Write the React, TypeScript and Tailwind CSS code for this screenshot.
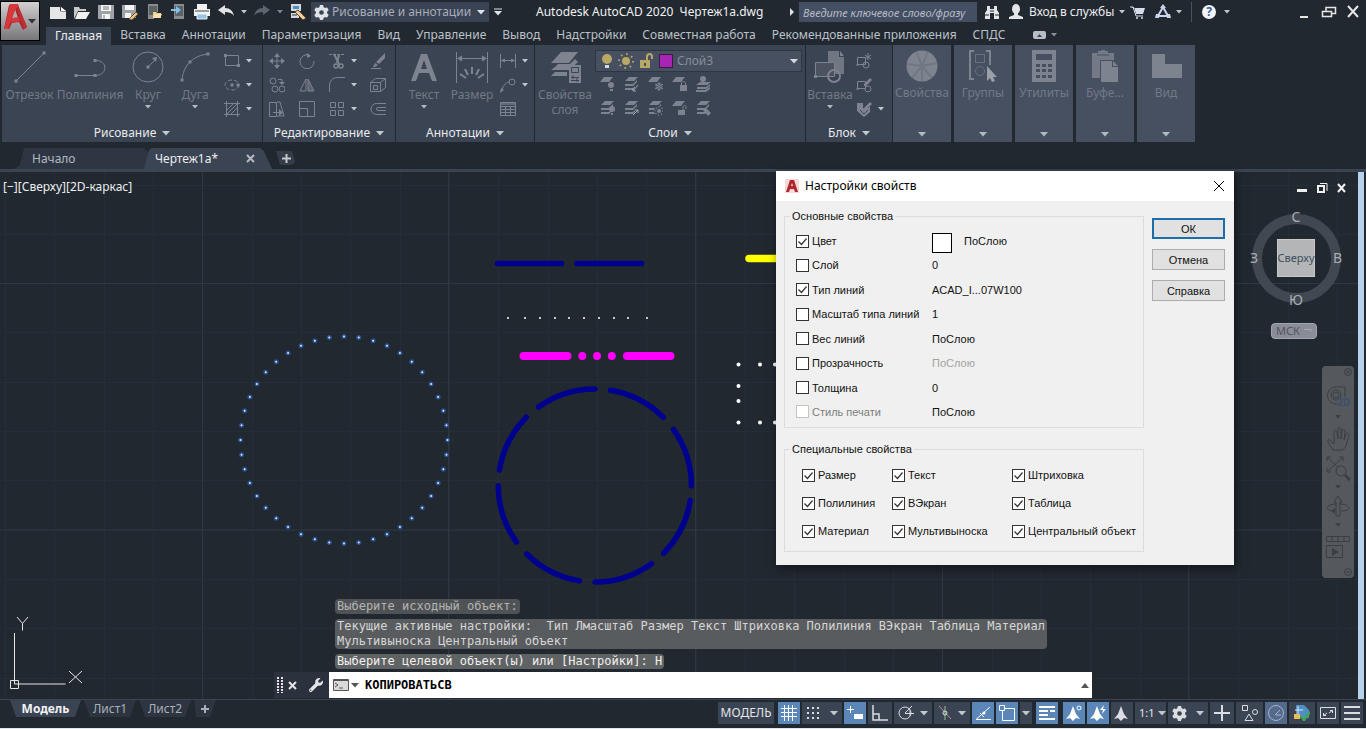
import type { ReactNode } from 'react';
import { FaWrench } from 'react-icons/fa';
import { FaGear } from 'react-icons/fa6';

type IconProps = { w?: number; h?: number; className?: string; children: ReactNode };

function Icon({ w = 16, h = 16, className = '', children }: IconProps) {
  return (
    <svg width={w} height={h} viewBox={`0 0 ${w} ${h}`} fill="none" stroke="currentColor" className={`shrink-0 ${className}`} aria-hidden="true">
      {children}
    </svg>
  );
}

function Caret({ className = 'text-[#c3c7ce]', size = 'sm' }: { className?: string; size?: 'sm' | 'md' }) {
  return size === 'sm' ? (
    <Icon w={6} h={4} className={className}><path d="M0 0h6L3 3.5z" fill="currentColor" stroke="none" /></Icon>
  ) : (
    <Icon w={8} h={5} className={className}><path d="M0 0h8L4 4.5z" fill="currentColor" stroke="none" /></Icon>
  );
}

const solid = { fill: 'currentColor', stroke: 'none' };

const logoLetter = (
  <>
    <path d="M5 1h9l9 22-4 3-4-8-7 1-3 6H0z" fill="#a8262b" stroke="none" />
    <path d="m8 14 3-9 3 9z" fill="#b3adae" stroke="none" />
    <path d="M6 0h8l1 3-3 1-5 13-3 8H0zM8 14l7-1 1 4-9 2z" fill="#d5393c" stroke="none" />
    <path d="m14 2 9 21-3 2-7-19z" fill="#c22e33" stroke="none" />
  </>
);

const quickAccess = [
  { name: 'Создать', icon: <Icon><path d="M0 3h10l6 4v8H0z" fill="#e6e6e6" stroke="none" /><path d="M10.500 2v5H16" stroke="#3a3f46" /><path d="m11 3 5 4h-5z" fill="#fff" stroke="none" /></Icon> },
  { name: 'Открыть', icon: <Icon><path d="M0 15V3h5l1 2h6v2H4z" fill="#c9c9c9" stroke="none" /><path d="M4 8h12l-4 7H1z" fill="#f0f0f0" stroke="none" /></Icon> },
  { name: 'Сохранить', icon: <Icon><path d="M0 1h16v14H0z" fill="#9fa3a8" stroke="none" /><path d="M3 1h10v6H3zM4 10h8v5H4z" fill="#f4f4f4" stroke="none" /><path d="M5 3h6M5 5h6M6 11v4" stroke="#777" /></Icon> },
  { name: 'Сохранить как', icon: <Icon><path d="M0 1h14v13H0z" fill="#9fa3a8" stroke="none" /><path d="M3 1h9v5H3zM3 9h6v5H3z" fill="#f4f4f4" stroke="none" /><path d="m7 15 7-7 2 2-6 6z" fill="#f1c27e" stroke="#6b5233" /></Icon> },
  { name: 'Открыть с устройства', icon: <Icon><path d="M2 0h10v8H8v7H2z" fill="#8a8d90" stroke="none" /><path d="M3 2h8v9H3z" fill="#5c6166" stroke="none" /><path d="M7 14V8h3l1 1h4v5z" fill="#f3cf8e" stroke="none" /><path d="m7 14 2-4h7l-2 4z" fill="#ffe2ad" stroke="none" /></Icon> },
  { name: 'Сохранить на устройстве', icon: <Icon><path d="M4 0h10v15H4z" fill="#8a8d90" stroke="none" /><path d="M5 2h8v10H5z" fill="#5c6166" stroke="none" /><path d="M1 5h5V2l5 4-5 4V7H1z" fill="#7cc3ee" stroke="none" /></Icon> },
  { name: 'Печать', icon: <Icon><path d="M3 0h10v5H3zM0 5h16v7H0z" fill="#f1f1f1" stroke="none" /><path d="M1 7h14" stroke="#444" /><path d="M3 10h10v5H3z" fill="#8fc4ec" stroke="#f1f1f1" /></Icon> },
];

function TitleBar() {
  return (
    <div className="flex h-6 items-center">
      <div className="flex items-center pl-[5px]">
        {quickAccess.map((q) => (
          <button key={q.name} aria-label={q.name} className="flex h-6 w-6 items-center justify-center">{q.icon}</button>
        ))}
        <button aria-label="Отменить" className="flex h-6 w-6 items-center justify-center text-[#e3e3e3]">
          <Icon><path d="M0 6 7 1v3c5 0 8 3 9 8-2-3-5-4-9-4v3z" {...solid} /></Icon>
        </button>
        <button aria-label="Список отмены" className="flex h-6 w-3 items-center justify-center"><Caret /></button>
        <button aria-label="Повторить" className="flex h-6 w-6 items-center justify-center text-[#5c6470]">
          <Icon><path d="M16 6 9 1v3C4 4 1 7 0 12c2-3 5-4 9-4v3z" {...solid} /></Icon>
        </button>
        <button aria-label="Список повторов" className="flex h-6 w-3 items-center justify-center"><Caret className="text-[#7c838e]" /></button>
        <button aria-label="Копирование свойств" className="flex h-6 w-6 items-center justify-center">
          <Icon><path d="M1 0h10v7H1zM1 9h8v5H1z" fill="#d5d8dc" stroke="none" /><path d="M3 2h6v3H3z" fill="#4a90c8" stroke="none" /><path d="M2 11h5" stroke="#333" /><path d="m5 8 3-2 8 8-3 2z" fill="#f0cf9c" stroke="#5a4630" /></Icon>
        </button>
      </div>
      <div className="ml-px flex h-5 w-[178px] items-center bg-[#3a4353] pr-1">
        <FaGear className="mx-[3px] h-[15px] w-[15px] text-[#dfe2e6]" />
        <select aria-label="Рабочее пространство" className="min-w-0 flex-1 appearance-none bg-transparent text-xs text-[#a7aeb9]">
          <option>Рисование и аннотации</option>
        </select>
        <Caret size="md" className="text-[#dfe2e6]" />
      </div>
      <button aria-label="Настройка панели" className="flex h-6 w-[18px] items-center justify-center text-[#dfe2e6]">
        <Icon w={8} h={8}><path d="M0 1h8" /><path d="M0 3h8L4 7.5z" {...solid} /></Icon>
      </button>
      <h1 className="ml-[29px] whitespace-pre text-xs text-[#f0f1f3]">Autodesk AutoCAD 2020  Чертеж1a.dwg</h1>
      <div className="ml-auto flex items-center">
        <Icon w={5} h={8} className="mr-1 text-[#dfe2e6]"><path d="M0 0v8l4-4z" {...solid} /></Icon>
        <input aria-label="Поиск" placeholder="Введите ключевое слово/фразу" className="h-5 w-[178px] bg-[#454f63] px-1 text-[11px] italic placeholder:text-[#b6bcc6]" />
        <button aria-label="Найти" className="ml-[7px] text-[#e3e5e8]">
          <Icon><path d="M3 2h3v3h4V2h3v4l2 3v6h-5V9H6v6H1V9l2-3z" {...solid} /><path d="M1 11h4M11 11h4M6 7h4" stroke="#212830" /></Icon>
        </button>
        <button className="ml-2 flex items-center gap-[5px] text-xs text-[#eceef0]">
          <Icon><ellipse cx="8" cy="5" rx="4" ry="5" fill="#e3e5e8" stroke="none" /><path d="M6 9h4v2l5 2v2H1v-2l5-2z" fill="#e3e5e8" stroke="none" /></Icon>
          <span className="w-[85px] whitespace-nowrap text-left">Вход в службы</span>
          <Caret />
        </button>
        <button aria-label="Магазин" className="ml-[5px] text-[#d5dcea]">
          <Icon><path d="M1 3h3l2 7h7l2-6H5z" {...solid} /><path d="M0 3h3l3 9h7" /><circle cx="7" cy="14" r="1" {...solid} /><circle cx="12" cy="14" r="1" {...solid} /></Icon>
        </button>
        <button aria-label="Autodesk App Store" className="ml-[9px] flex items-center gap-[5px] text-[#c9d4ee]">
          <Icon><path d="m8 3 5 9H3z" strokeWidth="2" /><path d="M8 0 5 4h6zM1 10h4l-1 4H0zM11 10h4l1 4h-4z" {...solid} /></Icon>
          <Caret />
        </button>
        <span className="ml-[9px] h-5 w-px bg-[#4a525e]" />
        <button aria-label="Справка" className="ml-[10px] flex items-center gap-2">
          <span className="flex h-[14px] w-[14px] items-center justify-center rounded-full bg-[#f2f4f7] text-xs font-bold leading-none text-[#34609a]">?</span>
          <Caret />
        </button>
        <button aria-label="Свернуть" className="ml-[66px] text-[#e6e6e6]"><Icon><path d="M4 13h8" strokeWidth="2" /></Icon></button>
        <button aria-label="Восстановить" className="ml-[9px] text-[#e6e6e6]"><Icon><path d="M5 7V3.500h9.500v6H11M1.500 7.500h9v5h-9z" strokeWidth="1.500" /></Icon></button>
        <button aria-label="Закрыть" className="ml-2 mr-[5px] text-[#e6e6e6]"><Icon><path d="m3 2 10 11M13 2 3 13" strokeWidth="2" /></Icon></button>
      </div>
    </div>
  );
}

const menuTabs = ['Вставка', 'Аннотации', 'Параметризация', 'Вид', 'Управление', 'Вывод', 'Надстройки', 'Совместная работа', 'Рекомендованные приложения', 'СПДС'];

function MenuTabs() {
  return (
    <nav className="flex h-[21px] items-stretch pl-[5px] text-xs text-[#bcc1c9]">
      <button className="mr-px mt-[3px] bg-[#3b4453] px-[9px] text-[#eceef1]">Главная</button>
      {menuTabs.map((t) => (
        <button key={t} className="whitespace-nowrap px-2 pt-px">{t}</button>
      ))}
      <button aria-label="Вид ленты" className="ml-[20px] flex items-center gap-[5px] pt-px">
        <Icon w={13} h={8}><rect width="13" height="8" rx="2" fill="#b9bdc4" stroke="none" /><path d="M4 6h5L6.500 3z" fill="#3b4453" stroke="none" /></Icon>
        <Caret className="text-[#8a919c]" />
      </button>
    </nav>
  );
}

const square = (x: number, y: number) => <rect x={x - 1.5} y={y - 1.5} width="3" height="3" {...solid} />;

const bigIcons = {
  line: <Icon w={32} h={32}><path d="M2 30 30 2" />{square(2, 30)}{square(30, 2)}</Icon>,
  polyline: <Icon w={32} h={32}><path d="M1 24.500h20c13 0 13-15 1-15" />{square(2, 24.5)}{square(21, 24.5)}{square(21, 9.5)}</Icon>,
  circle: <Icon w={32} h={32}><circle cx="16" cy="16" r="15" />{square(16, 16)}<path d="m16 16 7-7" /><path d="m25 6-1 5-4-4z" {...solid} /></Icon>,
  arc: <Icon w={32} h={32}><path d="M3 29C4 15 14 4 30 3" />{square(3, 29)}{square(11, 11)}{square(29, 3)}</Icon>,
  text: <Icon w={32} h={32}><path d="M3 30 13 3h6l10 27h-5l-3-8H11l-3 8zM13 18h6l-3-9z" {...solid} /></Icon>,
  dimension: <Icon w={32} h={32}><path d="M.5 1v31M31.500 1v31M2 7.500h28" /><path d="m1 7.500 5-3v6zM31 7.500l-5-3v6z" {...solid} /><path d="M16 16v7M9 18l3 6M23 18l-3 6M4 23l6 4M28 23l-6 4" strokeWidth="2" /></Icon>,
  layers: <Icon w={32} h={32}><path d="M12 1h17l-9 11H2zM6 16l3-3h12l5-5 3 3-9 8H2zM2 25l4-4h12v4z" {...solid} /><rect x="20" y="14" width="12" height="18" {...solid} /><path d="M22.500 16.500h7v5h-7zM22 26.500h8M22 29.500h8M24 24v4M28 27v4" stroke="#3b4453" /></Icon>,
  insert: <Icon w={32} h={32}><path d="M14 0h11v6h5v17h-9V11h-7z" {...solid} opacity=".8" /><path d="m26 0 4 5h-4z" {...solid} /><path d="M1.500 11.500h19v14h-19z" fill="#4b5361" /><circle cx="20" cy="25" r="6" strokeWidth="2" />{square(1.5, 25.5)}</Icon>,
  properties: <Icon w={32} h={32}><circle cx="16" cy="16" r="15.500" {...solid} /><path d="M16 16 10 1M16 16 22 1M16 16 1 14M16 16l15-3M16 16 6 28M16 16l10 12M16 16v15" stroke="#646c78" strokeWidth="2" opacity=".5" /></Icon>,
  group: <Icon w={32} h={32}><path d="M7 1H3v28h4M19 1h4v14" strokeWidth="2" /><rect x="8.500" y="4.500" width="9" height="8" opacity=".6" /><circle cx="13" cy="21" r="4.500" opacity=".6" /><path d="M20 16v15l3-3 2 4 3-1-2-4h4z" fill="#9a9fa8" stroke="none" /></Icon>,
  utilities: <Icon w={32} h={32}><path d="M4 0h24v32H4z" {...solid} /><path d="M8 4h16v6H8zM8 14h4v3H8zM14 14h4v3h-4zM20 14h4v3h-4zM8 19h4v3H8zM14 19h4v3h-4zM20 19h4v3h-4zM8 25h4v3H8zM14 25h4v3h-4zM20 25h4v3h-4z" fill="#465061" stroke="none" /></Icon>,
  clipboard: <Icon w={32} h={32}><path d="M3 3h6V1h3V0h4v1h3v2h6v7H11v18H3z" {...solid} opacity=".8" /><path d="M8 5h12" stroke="#465061" /><path d="M12 11h11v6h6v15H12zM24 11l5 5h-5z" {...solid} /><path d="M11.500 32V10.500H24" stroke="#465061" /></Icon>,
  view: <Icon w={32} h={32}><path d="M2 4h13v10h17v14H2z" {...solid} /></Icon>,
};

type BigButtonProps = { label: string; second?: string; icon: ReactNode; width: string; arrow?: boolean };

function BigButton({ label, second, icon, width, arrow }: BigButtonProps) {
  return (
    <button className={`flex shrink-0 flex-col items-center pt-[6px] ${width}`}>
      {icon}
      <span className="mt-1 whitespace-nowrap text-xs text-[#727986]">{label}</span>
      {second && <span className="whitespace-nowrap text-xs leading-[14px] text-[#727986]">{second}</span>}
      {arrow && <Caret className="mt-[2px] text-[#b5bac2]" />}
    </button>
  );
}

function SmallButton({ name, icon, arrow }: { name: string; icon: ReactNode; arrow?: boolean }) {
  return (
    <button aria-label={name} className="flex h-6 items-center gap-[6px]">
      {icon}
      {arrow && <Caret className="text-[#c3c7ce]" />}
    </button>
  );
}

function Panel({ title, width, children }: { title: string; width: string; children: ReactNode }) {
  return (
    <section className={`flex shrink-0 flex-col bg-[#3b4453] text-[#7e848f] ${width}`}>
      <div className="flex flex-1">{children}</div>
      <button className="flex h-[18px] items-center justify-center gap-[6px] text-xs text-[#e8eaed]">
        {title}
        <Caret size="md" />
      </button>
    </section>
  );
}

const collapsed = [
  { label: 'Свойства', icon: bigIcons.properties },
  { label: 'Группы', icon: bigIcons.group },
  { label: 'Утилиты', icon: bigIcons.utilities },
  { label: 'Буфе...', icon: bigIcons.clipboard },
  { label: 'Вид', icon: bigIcons.view },
];

const sheets = <path d="M6 1h9l-4 4H2zM2 8h8l4-4v2l-4 4H2zM2 12h8l2-2v2l-2 2H2z" {...solid} />;
const sheet = <path d="M5 1h9l-4 5H1z" {...solid} />;

const layerTools = [
  { name: 'Отключить слой', icon: <Icon>{sheet}<circle cx="12" cy="9" r="3" {...solid} /><path d="M11 13h3v2h-3z" {...solid} /></Icon> },
  { name: 'Изолировать', icon: <Icon>{sheets}<path d="m15 9-5 6m0-3v3h3" stroke="#a0a5ad" /></Icon> },
  { name: 'Заморозить', icon: <Icon>{sheet}<path d="M12 6v9M8 8l8 5M16 8l-8 5" /><circle cx="12" cy="10.500" r="3" /></Icon> },
  { name: 'Блокировать', icon: <Icon>{sheet}<path d="M9 9h7v6H9z" {...solid} /><path d="M10.500 9V7c0-2 4-2 4 0v2" /></Icon> },
  { name: 'Сделать текущим', icon: <Icon><path d="M5 6h11l-4 3H1zM2 11h9l4-3v2l-4 3H2zM1 14h9l5-3v2l-4 3H1z" {...solid} /><circle cx="8" cy="3" r="3" {...solid} /></Icon> },
  { name: 'Включить все слои', icon: <Icon>{sheets}<circle cx="13" cy="9" r="3" {...solid} /><path d="M12 13h2v2h-2z" {...solid} /></Icon> },
  { name: 'Отменить изоляцию', icon: <Icon>{sheets}<path d="m10 15 5-5m-3 0h3v3" stroke="#a0a5ad" /></Icon> },
  { name: 'Разморозить', icon: <Icon>{sheets}<circle cx="12" cy="11" r="5" fill="#3b4453" stroke="none" /><circle cx="12" cy="11" r="2" {...solid} /><circle cx="12" cy="11" r="4" strokeDasharray="1 2" strokeWidth="1.500" /></Icon> },
  { name: 'Разблокировать', icon: <Icon>{sheet}<path d="M7 10h7v5H7z" {...solid} /><path d="M12 10V7c0-2 3-2 3 0v2" /></Icon> },
  { name: 'Согласовать слой', icon: <Icon>{sheets}<path d="m8 10 3-2 5 5-3 3z" {...solid} /></Icon> },
];

const editTools = [
  [
    { name: 'Переместить', icon: <Icon><path d="M8 1v14M1 8h14" /><path d="m8 0 3 4H5zM8 16l3-4H5zM0 8l4-3v6zM16 8l-4-3v6z" {...solid} /></Icon> },
    { name: 'Копировать', icon: <Icon><circle cx="4" cy="4" r="3" /><circle cx="6" cy="12" r="3" /><circle cx="13" cy="12" r="3" /><path d="M9 2.500h4V6" /><path d="m10 5 3 3 3-3z" {...solid} /></Icon> },
    { name: 'Растянуть', icon: <Icon><path d="M.5 1.500h7v14h-7zM8 1h3l4 14H8M4 11.500h7" /><path d="m10 8 4 3.500-4 3.500z" {...solid} /></Icon> },
  ],
  [
    { name: 'Повернуть', icon: <Icon><path d="M10 2a7 7 0 1 0 5 6" /><path d="M8 0v5l4-2z" {...solid} /></Icon> },
    { name: 'Зеркало', icon: <Icon><path d="M7 2v12H1zM9 2v12h6z" /><path d="M9 2v12h6z" {...solid} opacity=".5" /></Icon> },
    { name: 'Масштаб', icon: <Icon><path d="M.5.5h15v15H.5zM.5 7.500h8v8" /></Icon> },
  ],
  [
    { name: 'Обрезать', icon: <Icon><path d="M0 1.500h16" strokeDasharray="3 1" /><path d="m5 1 5 10M10 2 8 10" strokeWidth="2" /><circle cx="7" cy="13" r="2" strokeWidth="1.500" /><circle cx="12" cy="13" r="2" strokeWidth="1.500" /></Icon>, arrow: true },
    { name: 'Сопряжение', icon: <Icon><path d="M.5 15V9c0-5 3-8.500 8-8.500H16" /></Icon>, arrow: true },
    { name: 'Массив', icon: <Icon><path d="M1.500 1.500h5v5h-5zM9.500 1.500h5v5h-5zM1.500 9.500h5v5h-5zM9.500 9.500h5v5h-5z" /></Icon>, arrow: true },
  ],
  [
    { name: 'Стереть', icon: <Icon><path d="M15 0v5l-6 6-3-2zM5 10l3 2-3 2H3z" {...solid} /><path d="M1 15.500h10" /></Icon> },
    { name: 'Расчленить', icon: <Icon><path d="M.5 5.500h10v9H.5zM.5 5.500l5-4h10v9l-5 4M10.500 5.500l5-4M3.500 8.500h4v4h-4z" /></Icon> },
    { name: 'Подобие', icon: <Icon><path d="M16 2.500H6.500a5.500 5.500 0 0 0 0 11H16M16 6.500H8a1.500 1.500 0 0 0 0 3h8" /></Icon> },
  ],
];

const drawTools = [
  { name: 'Прямоугольник', icon: <Icon><path d="M1.500 2.500h13v10h-13z" />{square(1.5, 2.5)}{square(14.5, 12.5)}</Icon> },
  { name: 'Эллипс', icon: <Icon><ellipse cx="8" cy="8" rx="7" ry="5" strokeDasharray="4 2" />{square(8, 8)}{square(14, 8)}</Icon> },
  { name: 'Штриховка', icon: <Icon><path d="M2.500 0v16M13.500 0v16M0 2.500h16M0 13.500h16M3 9l6-6M3 13 13 3M7 13l6-6" /></Icon> },
];

const noteTools = [
  { name: 'Линейный', icon: <Icon><path d="M.5 1v14M15.500 1v14M1 7.500h14" /><path d="m1 7.500 4-2v4zM15 7.500l-4-2v4z" {...solid} /></Icon>, arrow: true },
  { name: 'Выноска', icon: <Icon><circle cx="12" cy="5" r="3" /><path d="M9 5C5 6 3 9 1 15" /><path d="m0 16 1-5 3 2z" {...solid} /></Icon>, arrow: true },
  { name: 'Таблица', icon: <Icon><path d="M.5 1.500h15v13H.5zM1 5.500h14M1 8.500h14M1 11.500h14M5.500 5v10M10.500 5v10" /><path d="M1 2h14v2H1z" {...solid} opacity=".6" /></Icon> },
];

const blockBase = <path d="M1.500 4.500h8v7h-8zM0 12h3" />;

function Ribbon() {
  return (
    <div className="flex h-[97px] gap-px pl-[2px]">
      <Panel title="Рисование" width="w-[260px]">
        <BigButton label="Отрезок" icon={bigIcons.line} width="w-[55px]" />
        <BigButton label="Полилиния" icon={bigIcons.polyline} width="w-[66px]" />
        <BigButton label="Круг" icon={bigIcons.circle} width="w-[50px]" arrow />
        <BigButton label="Дуга" icon={bigIcons.arc} width="w-[44px]" arrow />
        <div className="ml-[7px] pt-1">
          {drawTools.map((t) => <SmallButton key={t.name} {...t} arrow />)}
        </div>
      </Panel>
      <Panel title="Редактирование" width="w-[132px]">
        <div className="flex gap-[14px] pl-[6px] pt-1">
          {editTools.map((column, i) => (
            <div key={i} className={i === 3 ? '-ml-px' : ''}>
              {column.map((t) => <SmallButton key={t.name} {...t} />)}
            </div>
          ))}
        </div>
      </Panel>
      <Panel title="Аннотации" width="w-[138px]">
        <BigButton label="Текст" icon={bigIcons.text} width="w-[56px]" arrow />
        <BigButton label="Размер" icon={bigIcons.dimension} width="w-[40px]" />
        <div className="ml-2 pt-1">
          {noteTools.map((t) => <SmallButton key={t.name} {...t} />)}
        </div>
      </Panel>
      <Panel title="Слои" width="w-[270px]">
        <BigButton label="Свойства" second="слоя" icon={bigIcons.layers} width="w-[60px]" />
        <div className="flex-1 pr-[3px] pt-[5px]">
          <div className="flex h-[22px] items-center border border-[#2d3643] bg-[#465061] pl-1 pr-[3px]">
            <Icon w={14} className="mr-1 text-[#b9a766]"><circle cx="7" cy="6" r="5" {...solid} /><path d="M5 12h4v3H5z" fill="#d9dbdd" stroke="none" /></Icon>
            <Icon className="mr-[5px] text-[#b9a766]"><circle cx="8" cy="8" r="4" {...solid} /><circle cx="8" cy="8" r="7" strokeWidth="2" strokeDasharray="1.500 4" /></Icon>
            <Icon w={14} className="mr-[6px] text-[#b9a766]"><path d="M1 7h10v8H1z" {...solid} /><path d="M8 7V4c0-4 5-4 5 0v2" strokeWidth="2" /><path d="M6 10v3" stroke="#465061" strokeWidth="2" /></Icon>
            <span className="mr-1 h-[14px] w-[14px] border border-[#3a1a44] bg-[#a825b4]" />
            <select aria-label="Слой" className="min-w-0 flex-1 appearance-none bg-transparent text-xs text-[#878e99]">
              <option>Слой3</option>
            </select>
            <Caret size="md" className="text-[#d5d8dc]" />
          </div>
          <div className="grid w-[124px] grid-cols-5 pl-1">
            {layerTools.map((t) => <SmallButton key={t.name} {...t} />)}
          </div>
        </div>
      </Panel>
      <Panel title="Блок" width="w-[86px]">
        <BigButton label="Вставка" icon={bigIcons.insert} width="w-[48px]" arrow />
        <div className="ml-[2px] pt-1">
          <SmallButton name="Создать блок" icon={<Icon>{blockBase}<circle cx="10" cy="12" r="3" /><path d="M12 0v7M9 2l6 4M15 2 9 6" /></Icon>} />
          <SmallButton name="Редактор блоков" icon={<Icon>{blockBase}<circle cx="12" cy="12" r="3" /><path d="m14 1 2 2-6 6H8V7z" {...solid} /></Icon>} />
          <SmallButton name="Атрибуты" arrow icon={<Icon><path d="M1 2h6v5l3 1 4-2v5l-6 5-7-6z" {...solid} /><path d="m14 1 2 2-6 6H8V7z" {...solid} /><path d="m4 9 4 4 4-4" stroke="#3b4453" /></Icon>} />
        </div>
      </Panel>
      <div className="flex gap-[3px]">
        {collapsed.map((c) => (
          <button key={c.label} className="flex w-[58px] flex-col items-center bg-[#465061] pb-[5px] pt-[5px] text-[#7e848f]">
            {c.icon}
            <span className="mt-[3px] text-xs text-[#727986]">{c.label}</span>
            <Caret size="md" className="mt-auto text-[#b5bac2]" />
          </button>
        ))}
      </div>
    </div>
  );
}

function DocumentTabs() {
  return (
    <div className="flex h-[30px] items-end border-b-[3px] border-[#3b4453] pl-[14px] text-xs">
      <button className="h-[21px] w-[134px] bg-[#2e3643] pl-[18px] text-left text-[#b4b9c1] [clip-path:polygon(0_100%,6px_80%,10px_0,calc(100%-4px)_0,100%_20%,100%_100%)]">Начало</button>
      <div className="-ml-1 flex h-[21px] w-[128px] items-center bg-[#3b4453] pl-[11px] text-[#eceef1] [clip-path:polygon(0_100%,5px_10%,8px_0,calc(100%-12px)_0,calc(100%-8px)_15%,100%_100%)]">
        <button>Чертеж1a*</button>
        <button aria-label="Закрыть вкладку" className="ml-auto mr-[17px] text-[#b4b9c1]"><Icon w={9} h={9}><path d="m1 1 7 7M8 1 1 8" strokeWidth="2" /></Icon></button>
      </div>
      <button aria-label="Новая вкладка" className="mb-1 ml-1 flex h-[14px] w-[20px] items-center justify-center rounded-r-md bg-[#343c48] text-[#c3c7ce] [clip-path:polygon(0_0,80%_0,100%_100%,20%_100%)]">
        <Icon w={9} h={9}><path d="M0 4.500h9M4.500 0v9" strokeWidth="2" /></Icon>
      </button>
    </div>
  );
}

// Selected circle: 44 grips around the centre
const grips = Array.from({ length: 44 }, (_, i) => {
  const a = (i / 44) * Math.PI * 2;
  return { x: 344 + 103.5 * Math.cos(a), y: 268 + 103.5 * Math.sin(a) };
});

const minorLines = Array.from({ length: 28 }, (_, i) => 5 + i * 49.33);
const minorRows = Array.from({ length: 11 }, (_, i) => 12.5 + i * 49.33);

function Drawing() {
  return (
    <svg className="absolute inset-0 h-full w-full" aria-label="Чертеж">
      <g stroke="#252d36">
        {minorLines.map((x) => <path key={x} d={`M${Math.round(x)}.5 0v527`} />)}
        {minorRows.map((y) => <path key={y} d={`M0 ${Math.round(y)}.5h1358`} />)}
      </g>
      <path d="M202.500 0v527M448.500 0v527M695.500 0v527M942.500 0v527M1188.500 0v527M0 111.500h1358M0 358h1358" stroke="#2f3740" />
      {grips.map((g) => (
        <g key={`${g.x}-${g.y}`}>
          <circle cx={g.x} cy={g.y} r="2.500" fill="#27508f" />
          <circle cx={g.x} cy={g.y} r="1" fill="#dce8ff" />
        </g>
      ))}
      <g stroke="#00008f" strokeWidth="5.500" strokeLinecap="round" fill="none">
        <path d="M497.500 91.500h64M577 91.500h64.500" />
        <circle cx="594.800" cy="313.500" r="96.600" strokeDasharray="60 15.870" transform="rotate(9 594.800 313.500)" />
      </g>
      <path d="M749 86.500h40" stroke="#ff0" strokeWidth="7.500" strokeLinecap="round" />
      <path d="M523.500 184h44M582.300 184h.01M597 184h.01M611.800 184h.01M627 184h43.500" stroke="#f0f" strokeWidth="8" strokeLinecap="round" />
      {[508, 525, 540, 555, 569, 584, 599, 614, 628, 647].map((x) => <circle key={x} cx={x} cy="146" r="1" fill="#fff" />)}
      {[[738.5, 192.5], [760, 192.5], [775, 192.5], [738.5, 214], [738.5, 229], [738.5, 250.5], [760, 250.5], [775, 250.5]].map(([x, y]) => (
        <circle key={`${x}-${y}`} cx={x} cy={y} r="2" fill="#fff" />
      ))}
      <g stroke="#e6e6e6" fill="none">
        <path d="M14.500 461v51h51M10.500 508.500h8v8h-8z" />
        <path d="m17 445 5.500 6.500L28 445M22.500 451.500v7M69 499l13 12M82 499l-13 12" />
      </g>
    </svg>
  );
}

function ViewCube() {
  return (
    <div className="absolute right-[23px] top-[37px] flex w-[94px] flex-col items-center">
      <div className="relative flex h-[98px] w-full items-center justify-center text-sm text-[#a9adb3]">
        <div className="absolute h-[89px] w-[89px] rounded-full border-[10px] border-[#414852]" />
        <span className="absolute -top-[2px]">С</span>
        <span className="absolute left-px">З</span>
        <span className="absolute right-px">В</span>
        <span className="absolute -bottom-[3px]">Ю</span>
        <button className="relative flex h-[38px] w-[38px] items-center justify-center border border-[#c9c9c9] bg-[#b3b5b6] text-[11px] text-[#3f5060]">Сверху</button>
      </div>
      <button className="mr-1 mt-4 flex h-4 w-[46px] items-center justify-between rounded border border-[#a2a5ae] bg-[#8a8d97] px-1 text-[11px] text-[#50555f]">
        МСК
        <Icon w={9} h={6} className="text-[#a9acb5]"><path d="M1 1.500h7v2" /></Icon>
      </button>
    </div>
  );
}

function NavigationBar() {
  return (
    <div className="absolute right-3 top-[194px] flex h-[212px] w-8 flex-col items-center rounded bg-[#55585c] text-[#3b3f45]">
      <Icon w={8} h={8} className="mr-[2px] mt-[2px] self-end"><circle cx="4" cy="4" r="3.500" /><path d="m2.500 2.500 3 3m0-3-3 3" /></Icon>
      <button aria-label="Штурвал" className="mt-2">
        <Icon w={24} h={24}><path d="M19 13V3H9a8 8 0 1 0 2 17" /><circle cx="10" cy="11" r="5" /><circle cx="10" cy="11" r="3" /><text x="11" y="22" fontSize="10" fontWeight="bold" fill="#3c4f6b" stroke="none">2D</text></Icon>
      </button>
      <Caret className="mt-[7px]" />
      <button aria-label="Панорама" className="mt-2">
        <Icon w={24} h={26}><path d="M7 23 2 15c-1-2 1-3 3-1l3 3V5c0-2 2-2 3 0l1 7V2c0-2 3-2 3 0v10l1-8c0-2 3-2 3 0l-1 9 2-6c1-2 3-1 3 1l-3 11-3 4z" /></Icon>
      </button>
      <button aria-label="Показать до границ" className="mt-[2px]">
        <Icon w={26} h={26}><path d="m2 2 16 15M18 2 2 17M2 6V2h4M14 2h4v4M2 13v4h4" /><circle cx="16" cy="16" r="5" fill="#55585c" /><path d="m20 20 5 5" strokeWidth="3" /></Icon>
      </button>
      <Caret className="mt-1" />
      <button aria-label="Орбита" className="mt-[5px]">
        <Icon w={24} h={24}><path d="M10 22V8H8l4-6 4 6h-2v14zM10 10c-5 0-9 2-9 4s4 3 8 3M14 10c5 0 9 2 9 4s-4 3-8 3" /><path d="m9 14-4 3 4 3z" {...solid} /></Icon>
      </button>
      <Caret className="mt-[5px]" />
      <button aria-label="Аниматор движения" className="mt-2">
        <Icon w={24} h={24}><path d="M.5 1.500h23v5H.5zM6 1v6M12 1v6M18 1v6M.5 10.500h16v12H.5z" /><path d="m6 13 7 4-7 4z" {...solid} /></Icon>
      </button>
      <Icon w={8} h={8} className="mb-[2px] mr-[2px] mt-auto self-end"><circle cx="4" cy="4" r="3.500" /><path d="M2 4h4" /></Icon>
    </div>
  );
}

function Check({ label, checked, disabled }: { label: string; checked?: boolean; disabled?: boolean }) {
  return (
    <label className={`flex items-center gap-[3px] whitespace-nowrap ${disabled ? 'text-[#7d7d7d]' : ''}`}>
      <span className="relative h-[13px] w-[13px] shrink-0">
        <input type="checkbox" defaultChecked={checked} disabled={disabled} className="peer block h-[13px] w-[13px] appearance-none border border-[#333] bg-white disabled:border-[#c4c4c4]" />
        <svg viewBox="0 0 13 13" className="pointer-events-none absolute inset-0 hidden fill-none stroke-[#333] peer-checked:block"><path d="m2.500 6.500 3 3 5-6" strokeWidth="1.200" /></svg>
      </span>
      {label}
    </label>
  );
}

const basic = [
  { label: 'Цвет', checked: true, value: 'ПоСлою', swatch: true },
  { label: 'Слой', value: '0' },
  { label: 'Тип линий', checked: true, value: 'ACAD_I...07W100' },
  { label: 'Масштаб типа линий', value: '1' },
  { label: 'Вес линий', value: 'ПоСлою' },
  { label: 'Прозрачность', value: 'ПоСлою', dim: true },
  { label: 'Толщина', value: '0' },
  { label: 'Стиль печати', value: 'ПоСлою', disabled: true },
];

const special = ['Размер', 'Текст', 'Штриховка', 'Полилиния', 'ВЭкран', 'Таблица', 'Материал', 'Мультивыноска', 'Центральный объект'];

function SettingsDialog() {
  return (
    <div role="dialog" aria-labelledby="dialog-title" className="absolute -top-px left-[776px] w-[458px] bg-[#f0f0f0] shadow-[2px_3px_10px_rgba(0,0,0,0.5)]">
      <div className="flex h-[30px] items-center bg-white px-[9px] text-xs text-black">
        <Icon w={14} h={14} className="mr-[6px] bg-[#f6dad8]"><path d="M1 13 5 1h4l4 12h-3l-1-3H5l-1 3zM6 7h2L7 4z" fill="#b1272d" stroke="none" /></Icon>
        <h2 id="dialog-title">Настройки свойств</h2>
        <button aria-label="Закрыть окно" className="ml-auto"><Icon w={12} h={12}><path d="m1 1 10 10M11 1 1 11" /></Icon></button>
      </div>
      <div className="flex gap-2 px-2 pb-[13px] pt-2 font-['Liberation_Sans',Arial,sans-serif] text-[11px] leading-[14px] text-[#111]">
        <div className="flex w-[360px] flex-col gap-[14px]">
          <fieldset className="border border-[#dcdcdc] pb-[3px] pl-[11px]">
            <legend className="-ml-[6px] px-[2px]">Основные свойства</legend>
            <div className="flex h-[201px] flex-col justify-between pt-[6px]">
              {basic.map((b) => (
                <div key={b.label} className="flex h-6 items-center">
                  <div className="w-[136px]">
                    <Check label={b.label} checked={b.checked} disabled={b.disabled} />
                  </div>
                  {b.swatch && <button aria-label="Выбрать цвет" className="mr-3 mt-1 h-5 w-5 border border-black bg-white" />}
                  <span className={b.dim ? 'text-[#a3a3a3]' : ''}>{b.value}</span>
                </div>
              ))}
            </div>
          </fieldset>
          <fieldset className="border border-[#dcdcdc] pb-[6px] pl-[17px]">
            <legend className="-ml-3 px-[2px]">Специальные свойства</legend>
            <div className="grid grid-cols-[90px_120px_auto] pt-[5px]">
              {special.map((s) => (
                <div key={s} className="flex h-7 items-center"><Check label={s} checked /></div>
              ))}
            </div>
          </fieldset>
        </div>
        <div className="flex w-[73px] flex-col gap-[10px] pt-[9px]">
          <button className="h-[21px] border-2 border-[#1c6ea8] bg-[#e1e1e1]">ОК</button>
          <button className="h-[21px] border border-[#adadad] bg-[#e1e1e1]">Отмена</button>
          <button className="h-[21px] border border-[#adadad] bg-[#e1e1e1]">Справка</button>
        </div>
      </div>
    </div>
  );
}

function CommandLine() {
  return (
    <div className="absolute bottom-px left-[274px] w-[818px] font-['DejaVu_Sans_Mono',monospace] text-xs leading-[15px]">
      <div className="mb-[3px] ml-[61px] flex flex-col items-start gap-[5px] whitespace-pre">
        <p className="rounded-sm bg-[#505356] px-[2px] text-[#b3b3b3]">Выберите исходный объект:</p>
        <p className="rounded-sm bg-[#595c5e] px-[2px] text-[#d6d6d6]">
          {'Текущие активные настройки:  Тип Лмасштаб Размер Текст Штриховка Полилиния ВЭкран Таблица Материал\nМультивыноска Центральный объект'}
        </p>
        <p className="rounded-sm bg-[#606364] px-[2px] text-[#f0f0f0]">Выберите целевой объект(ы) или [Настройки]: Н</p>
      </div>
      <div className="flex h-[26px]">
        <div className="flex w-[55px] items-center bg-[#2b323d] pl-[3px] text-[#e3e5e8]">
          <Icon w={6} h={16}><path d="M1 0v16M5 0v16" strokeWidth="2" strokeDasharray="2 1" /></Icon>
          <button aria-label="Закрыть" className="ml-[5px]"><Icon w={9} h={9}><path d="m1 1 7 7M8 1 1 8" strokeWidth="2" /></Icon></button>
          <button aria-label="Адаптация" className="ml-3"><FaWrench className="h-[14px] w-[14px]" /></button>
        </div>
        <div className="flex flex-1 items-center bg-white pl-1 pr-[3px]">
          <Icon className="text-[#555]"><path d="M.5 2.500h15v11H.5z" fill="#d9d9d9" /><path d="M1 3h14" strokeWidth="2" /><path d="m2 6 3 2-3 2M6 11h4" /></Icon>
          <Caret size="md" className="ml-[2px] text-[#555]" />
          <input aria-label="Команда" defaultValue="КОПИРОВАТЬСВ" className="ml-[6px] min-w-0 flex-1 bg-transparent font-bold text-black" />
          <Icon w={8} h={5} className="text-[#555]"><path d="M0 5h8L4 0z" {...solid} /></Icon>
        </div>
      </div>
    </div>
  );
}

function Canvas() {
  return (
    <main className="relative min-h-0 flex-1">
      <Drawing />
      <div className="absolute right-[18px] top-[10px] flex gap-2 text-[#f0f0f0]">
        <button aria-label="Свернуть чертеж"><Icon w={12} h={12}><path d="M1 8.500h10" strokeWidth="3" /></Icon></button>
        <button aria-label="Восстановить чертеж"><Icon w={12} h={12}><path d="M4 1.500h7V9" /><path d="M2 4h6v6H2z" strokeWidth="2" /></Icon></button>
        <button aria-label="Закрыть чертеж"><Icon w={12} h={12}><path d="m2 2 7 8M9 2 2 10" strokeWidth="2" /></Icon></button>
      </div>
      <button className="absolute left-[3px] top-[7px] text-xs text-[#eceef1]">[−][Сверху][2D-каркас]</button>
      <ViewCube />
      <NavigationBar />
      <div className="absolute bottom-0 right-[2px] top-0 w-[6px] bg-[#b7d2ec]" />
      <SettingsDialog />
      <CommandLine />
    </main>
  );
}

const tone = {
  on: 'bg-[#5a86b8] text-white',
  dim: 'bg-[#546a8b] text-[#a6b6cc]',
  off: 'bg-[#3b4453] text-[#dadde2]',
};

type StatusProps = { name: string; width?: string; state?: keyof typeof tone; arrow?: boolean; icon: ReactNode };

function StatusButton({ name, width = 'w-[22px]', state = 'off', arrow, icon }: StatusProps) {
  return (
    <button aria-label={name} className={`flex h-[22px] shrink-0 items-center ${arrow ? 'justify-between px-1' : 'justify-center'} ${width} ${tone[state]}`}>
      {icon}
      {arrow && <Caret size="md" />}
    </button>
  );
}

const person = <path d="m7 1 3 8 4 5-4-1-3 3-3-3-4 1 4-5z" {...solid} />;

const statusItems: StatusProps[] = [
  { name: 'Сетка', state: 'on', icon: <Icon><path d="M3.500 0v16M7.500 0v16M11.500 0v16M0 3.500h16M0 7.500h16M0 11.500h16" /></Icon> },
  { name: 'Шаговая привязка', width: 'w-[40px]', arrow: true, icon: <Icon w={14}><path d="M1 3h14M1 8h14M1 13h14" strokeWidth="2" strokeDasharray="2 3" /></Icon> },
  { name: 'Динамический ввод', state: 'on', icon: <Icon><path d="M0 4.500h7M3.500 1v7" /><path d="M7 9h9v5H7z" {...solid} /></Icon> },
  { name: 'Орто', width: 'w-6', icon: <Icon><path d="M1 0v15h15M1 9h6v6" strokeWidth="1.500" /></Icon> },
  { name: 'Полярное отслеживание', width: 'w-[38px]', arrow: true, icon: <Icon><circle cx="7" cy="8" r="6" /><path d="M7 8.500h9M7 8l7-7M12 5v6" /></Icon> },
  { name: 'Изометрия', width: 'w-[36px]', arrow: true, icon: <Icon w={14}><path d="M7 1v14" stroke="#8cc28c" /><path d="m1 1 12 13" stroke="#c28c8c" /><circle cx="7" cy="8" r="2" /></Icon> },
  { name: 'Объектное отслеживание', state: 'on', icon: <Icon><path d="M15 2 1 14.500h15M5 8l4 4" /><circle cx="9" cy="8" r="1.500" {...solid} /></Icon> },
  { name: 'Объектная привязка', state: 'on', icon: <Icon><path d="M3.500 3.500h12v12h-12z" /><path d="M.5.5h5v5h-5z" fill="#5a86b8" /></Icon> },
];

const statusItemsRight: StatusProps[] = [
  { name: 'Видимость аннотаций', state: 'on', icon: <Icon>{person}<circle cx="13" cy="3" r="2" /></Icon> },
  { name: 'Автомасштаб', state: 'on', icon: <Icon>{person}<path d="m14 0-4 5h3l-1 4 4-5h-3z" {...solid} /></Icon> },
  { name: 'Масштаб аннотаций', icon: <Icon>{person}</Icon> },
];

const sheetTabs = ['Лист1', 'Лист2'];

function StatusBar() {
  return (
    <footer className="flex h-[30px] shrink-0 items-start border-b border-[#dfe7ee] border-t border-t-[#3b4453] text-xs">
      <div className="flex gap-[3px] pl-[10px] text-[#a9afb9]">
        <button className="h-[17px] w-[71px] bg-[#3b4453] font-bold text-[#f0f1f3] [clip-path:polygon(0_0,100%_0,calc(100%-6px)_100%,6px_100%)]">Модель</button>
        {sheetTabs.map((s) => (
          <button key={s} className="h-[17px] w-[52px] bg-[#2d3540] [clip-path:polygon(0_0,100%_0,calc(100%-6px)_100%,6px_100%)]">{s}</button>
        ))}
        <button aria-label="Новый лист" className="flex h-[17px] w-[22px] items-center justify-center bg-[#2d3540] [clip-path:polygon(0_0,100%_0,calc(100%-6px)_100%,2px_100%)]">
          <Icon w={8} h={8}><path d="M0 4h8M4 0v8" strokeWidth="2" /></Icon>
        </button>
      </div>
      <div className="ml-auto flex gap-[2px] pr-[3px] pt-[2px]">
        <button className="mr-[2px] h-[22px] w-[56px] bg-[#3b4453] text-[#e3e5e8]">МОДЕЛЬ</button>
        {statusItems.map((s) => <StatusButton key={s.name} {...s} />)}
        <button aria-label="Режимы привязки" className="mr-[2px] flex h-[22px] w-3 items-center justify-center bg-[#3b4453] text-[#c3c7ce]"><Caret size="md" /></button>
        <StatusButton name="Вес линий" state="on" icon={<Icon><path d="M0 2h16M0 6h9M11 6h5M0 10h9M0 14h16" strokeWidth="2" /></Icon>} />
        <span className="w-px" />
        {statusItemsRight.map((s) => <StatusButton key={s.name} {...s} />)}
        <button className="flex h-[22px] w-[31px] items-center justify-between bg-[#3b4453] pl-1 text-[11px] text-[#e3e5e8]">1:1<Caret size="md" /></button>
        <StatusButton name="Параметры" width="w-[40px]" arrow icon={<FaGear className="h-[15px] w-[15px]" />} />
        <StatusButton name="Монитор аннотаций" width="w-6" icon={<Icon><path d="M0 8h16M8 0v16" strokeWidth="2" /></Icon>} />
        <StatusButton name="Изолировать объекты" width="w-[27px]" icon={<Icon><path d="M.5.5h5v5h-5zM7 9l4 6.500H3z" /><circle cx="13" cy="7" r="2.500" /></Icon>} />
        <StatusButton name="Производительность" state="dim" icon={<Icon><circle cx="8" cy="8" r="7.500" /><path d="m7 10 5-5M8 10h5" /></Icon>} />
        <StatusButton name="Проверка" width="w-[26px]" icon={<Icon><path d="M2 0h8l5 5v8H2z" fill="#4f8fc4" stroke="none" /><path d="M4 1v8M1 5h8" stroke="#dfe9f2" /><path d="M0 9h6v5H0z" fill="#e9bd52" stroke="none" /><path d="m7 11 3 4 6-8" stroke="#44a35a" strokeWidth="2.500" /></Icon>} />
        <StatusButton name="Очистить экран" icon={<Icon><path d="M.5 2.500h15v11H.5zM3 11l4-3M13 5 9 8M3.500 8v2.500H6M10 5.500h2.500V8" /></Icon>} />
        <StatusButton name="Адаптация" icon={<Icon><path d="M0 2h16M0 8h16M0 14h16" strokeWidth="2" /></Icon>} />
      </div>
    </footer>
  );
}

export default function App() {
  return (
    <div className="flex h-screen flex-col overflow-hidden bg-[#212830] font-['Noto_Sans','Open_Sans',sans-serif]">
      <header className="shrink-0">
        <div className="flex">
          <button aria-label="Меню приложения" className="mt-px flex h-10 w-10 shrink-0 items-center border border-black bg-linear-to-b from-[#d3d0d0] to-[#77777b] pl-[3px]">
            <Icon w={24} h={26} className="mb-[9px]">{logoLetter}</Icon>
            <Caret size="md" className="text-[#333]" />
          </button>
          <div className="min-w-0 flex-1 pl-px">
            <TitleBar />
            <MenuTabs />
          </div>
        </div>
        <Ribbon />
        <DocumentTabs />
      </header>
      <Canvas />
      <StatusBar />
    </div>
  );
}
